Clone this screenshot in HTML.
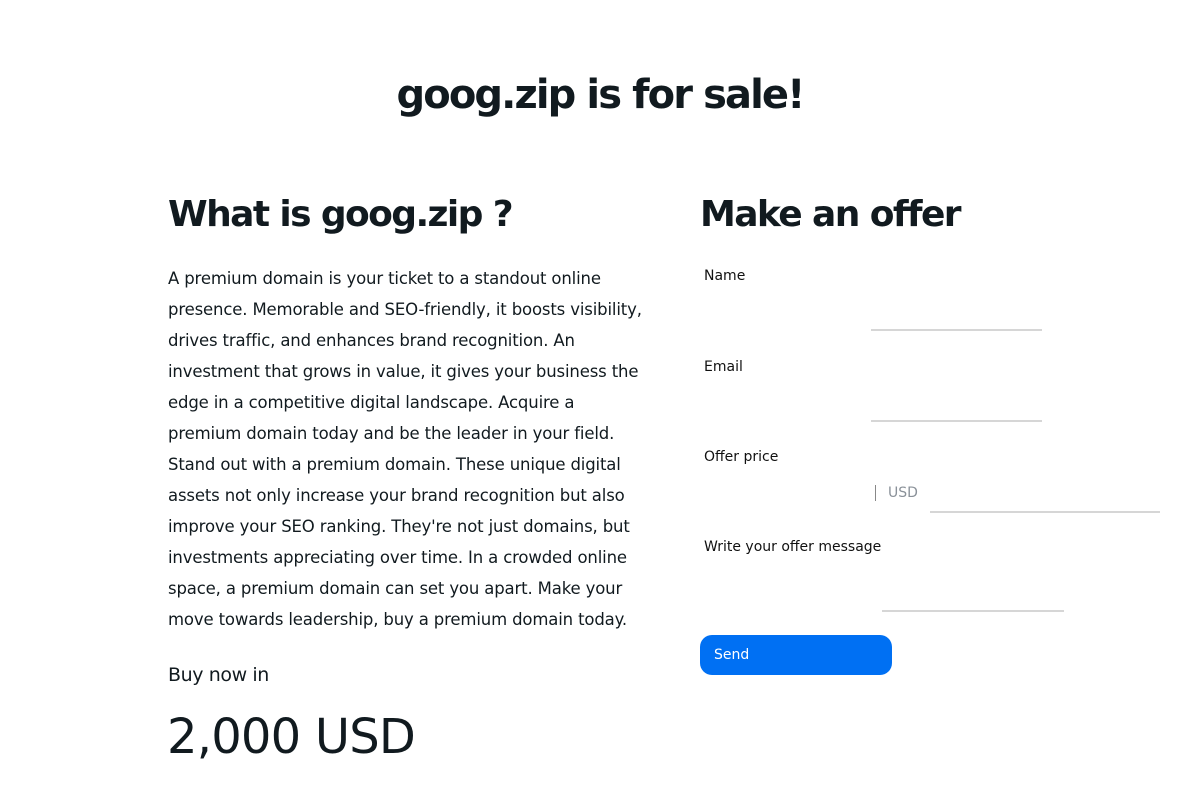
<!DOCTYPE html>
<html><head><meta charset="utf-8"><style>
body{margin:0;width:1200px;height:800px;background:#fff;font-family:"DejaVu Sans","Liberation Sans",sans-serif;color:#111a1f;position:relative;overflow:hidden}
.a{position:absolute;white-space:nowrap}
h1,h2{margin:0;font-weight:bold}
.t{top:70px;left:0;width:1200px;text-align:center;font-size:40px;letter-spacing:-1.9px;line-height:50px}
.h{font-size:36px;letter-spacing:-1.6px;line-height:44px}
.p{left:168px;top:263px;font-size:16.5px;line-height:31px;letter-spacing:-0.15px}
.l{font-size:14px;color:#111;line-height:18px;left:704px}
.ln{height:2px;background:#d6d6d6}
</style></head><body>
<h1 class="a t">goog.zip is for sale!</h1>
<h2 class="a h" style="left:168px;top:193px">What is goog.zip ?</h2>
<h2 class="a h" style="left:700px;top:193px">Make an offer</h2>
<div class="a p">A premium domain is your ticket to a standout online<br>presence. Memorable and SEO-friendly, it boosts visibility,<br>drives traffic, and enhances brand recognition. An<br>investment that grows in value, it gives your business the<br>edge in a competitive digital landscape. Acquire a<br>premium domain today and be the leader in your field.<br>Stand out with a premium domain. These unique digital<br>assets not only increase your brand recognition but also<br>improve your SEO ranking. They're not just domains, but<br>investments appreciating over time. In a crowded online<br>space, a premium domain can set you apart. Make your<br>move towards leadership, buy a premium domain today.</div>
<div class="a" style="left:168px;top:663px;font-size:19px;line-height:24px;letter-spacing:-0.4px">Buy now in</div>
<div class="a" style="left:167px;top:708px;font-size:48px;line-height:58px;letter-spacing:-0.8px">2,000 USD</div>
<div class="a l" style="top:267px">Name</div>
<div class="a ln" style="left:871px;top:329px;width:171px"></div>
<div class="a l" style="top:358px">Email</div>
<div class="a ln" style="left:871px;top:420px;width:171px"></div>
<div class="a l" style="top:448px">Offer price</div>
<div class="a" style="left:875px;top:485px;width:1px;height:16px;background:#888"></div>
<div class="a" style="left:888px;top:484px;font-size:14px;color:#8a9199;line-height:18px">USD</div>
<div class="a ln" style="left:930px;top:511px;width:230px"></div>
<div class="a l" style="top:538px">Write your offer message</div>
<div class="a ln" style="left:882px;top:610px;width:182px"></div>
<div class="a" style="left:700px;top:635px;width:192px;height:40px;border-radius:12px;background:#0070f3"></div>
<div class="a" style="left:714px;top:646px;font-size:14px;color:#fff;line-height:18px">Send</div>
</body></html>
